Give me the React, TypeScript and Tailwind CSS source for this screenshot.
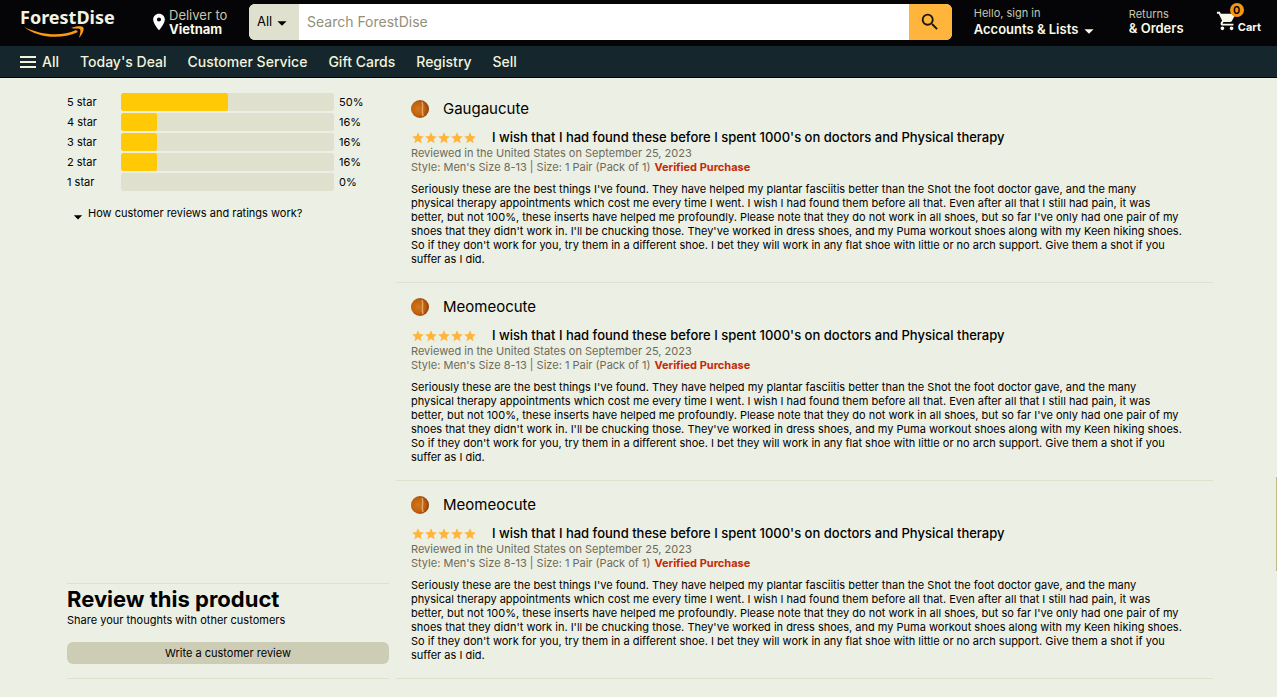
import React from "react";
import { MdLocationOn, MdSearch, MdShoppingCart, MdStar, MdArrowDropDown } from "react-icons/md";

const ratings = [
  { stars: 5, percent: 50 },
  { stars: 4, percent: 16 },
  { stars: 3, percent: 16 },
  { stars: 2, percent: 16 },
  { stars: 1, percent: 0 },
];

const reviewText = [
  "Seriously these are the best things I've found. They have helped my plantar fasciitis better than the Shot the foot doctor gave, and the many",
  "physical therapy appointments which cost me every time I went. I wish I had found them before all that. Even after all that I still had pain, it was",
  "better, but not 100%, these inserts have helped me profoundly. Please note that they do not work in all shoes, but so far I've only had one pair of my",
  "shoes that they didn't work in. I'll be chucking those. They've worked in dress shoes, and my Puma workout shoes along with my Keen hiking shoes.",
  "So if they don't work for you, try them in a different shoe. I bet they will work in any flat shoe with little or no arch support. Give them a shot if you",
  "suffer as I did.",
].join("\n");

const reviewers = ["Gaugaucute", "Meomeocute", "Meomeocute"];

const navLinks = ["Today's Deal", "Customer Service", "Gift Cards", "Registry", "Sell"];

function Logo() {
  return (
    <a href="#" className="flex w-24 flex-col text-[#f3f3e2]">
      <span className="font-['Noto_Sans',sans-serif] text-[18px] leading-[18px] font-bold">ForestDise</span>
      <svg viewBox="0 0 64 13" className="ml-1 h-[13px] w-16" aria-hidden="true">
        <path d="M0 1C17 9 37 11 52 4L54 6C36 14 14 12 0 1Z" fill="#ff9913" />
        <path d="M47 2C52 0 57 0 59 1C61 3 58 9 55 12C56 8 57 5 56 3C54 2 50 3 47 2Z" fill="#ff9913" />
      </svg>
    </a>
  );
}

function Header() {
  return (
    <header>
      <div className="flex h-[46px] items-center bg-[#050507] pr-4 pl-5">
        <Logo />
        <a href="#" className="ml-[33px] flex w-[100px] items-center pb-0.5 text-[13px] leading-[14px]">
          <MdLocationOn className="size-5 shrink-0 text-white" />
          <span className="flex flex-col whitespace-nowrap">
            <span className="text-[#c8c6ac]">Deliver to</span>
            <span className="font-bold text-[#fafae9]">Vietnam</span>
          </span>
        </a>
        <form className="-mt-0.5 flex h-9 min-w-0 flex-1 overflow-hidden rounded-md bg-white" onSubmit={(e) => e.preventDefault()}>
          <div className="relative w-[50px] shrink-0 bg-[#e0e0cf] text-black">
            <select aria-label="Search category" className="h-full w-full appearance-none bg-transparent pl-2 text-[13px] outline-none">
              <option>All</option>
            </select>
            <MdArrowDropDown className="pointer-events-none absolute top-2 right-1.5 size-[22px]" />
          </div>
          <input
            type="search"
            aria-label="Search ForestDise"
            placeholder="Search ForestDise"
            className="min-w-0 flex-1 bg-white px-2 pb-0.5 text-[14px] text-black outline-none placeholder:text-[#929078]"
          />
          <button type="submit" aria-label="Search" className="flex w-[43px] items-center justify-center bg-[#ffb43c] text-[#1b160c]">
            <MdSearch className="size-[22px]" />
          </button>
        </form>
        <a href="#" className="ml-[22px] flex w-[155px] flex-col pb-1.5 whitespace-nowrap">
          <span className="pt-0.5 text-[11px] leading-4 text-[#c8c6ac]">Hello, sign in</span>
          <span className="flex h-4 items-center text-[13px] leading-4 font-semibold text-[#fafae9]">
            Accounts &amp; Lists
            <MdArrowDropDown className="mt-1 size-[22px]" />
          </span>
        </a>
        <a href="#" className="flex w-[87px] flex-col pb-1.5 whitespace-nowrap">
          <span className="pt-0.5 text-[11px] leading-[14px] text-[#c8c6ac]">Returns</span>
          <span className="text-[13px] leading-[14px] font-semibold text-[#fafae9]">&amp; Orders</span>
        </a>
        <a href="#" className="relative flex items-center pb-1 text-[#fafae9]">
          <MdShoppingCart className="size-[22px]" />
          <span className="absolute -top-1 left-[14px] flex size-[14px] items-center justify-center rounded-full bg-[#f79614] text-[11px] font-semibold text-black">
            0
          </span>
          <span className="pt-3 text-[11px] leading-4 font-bold">Cart</span>
        </a>
      </div>
      <nav className="flex h-8 items-center gap-[21px] border-b border-black bg-[#15262d] px-5 text-[14px] font-medium text-[#f3f3dc]">
        <button type="button" className="flex items-center gap-1.5">
          <svg viewBox="0 0 16 12" className="h-3 w-4" aria-hidden="true">
            <path d="M0 1H16M0 6H16M0 11H16" stroke="currentColor" strokeWidth="2" />
          </svg>
          All
        </button>
        {navLinks.map((link) => (
          <a key={link} href="#" className="whitespace-nowrap">
            {link}
          </a>
        ))}
      </nav>
    </header>
  );
}

function RatingSummary() {
  return (
    <section>
      <ul className="flex flex-col gap-0.5">
        {ratings.map(({ stars, percent }) => (
          <li key={stars} className="flex h-[18px] items-center text-[11px]">
            <span className="w-[54px]">{stars} star</span>
            <div className="h-full w-[213px] overflow-hidden rounded-xs bg-[#e0e0cf]">
              <div className="h-full rounded-xs bg-[#ffca05]" style={{ width: `${percent === 16 ? 17 : percent}%` }} />
            </div>
            <span className="ml-[5px]">{percent}%</span>
          </li>
        ))}
      </ul>
      <button type="button" className="mt-2 ml-px flex items-center text-[11px] leading-4">
        <MdArrowDropDown className="mt-2 size-5" />
        How customer reviews and ratings work?
      </button>
    </section>
  );
}

function ReviewPrompt() {
  return (
    <section className="border-y border-[#e0e1cc]">
      <h2 className="mt-0.5 text-[22px] leading-[26px] font-bold">Review this product</h2>
      <p className="text-[11px] leading-4">Share your thoughts with other customers</p>
      <button type="button" className="mt-[14px] mb-[14px] h-[22px] w-full rounded-md bg-[#cdccb4] text-[11px]">
        Write a customer review
      </button>
    </section>
  );
}

function Avatar() {
  return (
    <svg viewBox="0 0 18 18" className="size-[18px]" aria-hidden="true">
      <defs>
        <radialGradient id="avatar-fill" cx="0.4" cy="0.5" r="0.6">
          <stop offset="0" stopColor="#d2781a" />
          <stop offset="0.6" stopColor="#c0620f" />
          <stop offset="1" stopColor="#93400b" />
        </radialGradient>
      </defs>
      <circle cx="9" cy="9" r="9" fill="url(#avatar-fill)" />
      <path d="M11 2C13 6 10 10 12 16" fill="none" stroke="#e0a468" strokeWidth="1.5" />
    </svg>
  );
}

function Review({ name }: { name: string }) {
  return (
    <article className="border-b border-[#e0e1cc] px-[15px] pt-3 pb-[15px] text-[11px] leading-[14px]">
      <div className="flex h-6 items-center gap-[14px]">
        <Avatar />
        <span className="text-[15px]">{name}</span>
      </div>
      <div className="mt-[7px] flex h-[18px] items-center">
        <div role="img" aria-label="5 out of 5 stars" className="flex w-[81px] pt-0.5 text-[#ffb43c]">
          {[1, 2, 3, 4, 5].map((n) => (
            <MdStar key={n} className="-mr-px size-[14px] last:mr-0" />
          ))}
        </div>
        <h3 className="text-[13px] font-medium">I wish that I had found these before I spent 1000's on doctors and Physical therapy</h3>
      </div>
      <p className="text-[#6d6b58]">Reviewed in the United States on September 25, 2023</p>
      <p className="text-[#6d6b58]">
        Style: Men's Size 8-13 | Size: 1 Pair (Pack of 1)
        <span className="ml-1 font-bold text-[#c52b05]">Verified Purchase</span>
      </p>
      <p className="mt-2 pb-px whitespace-pre-line">{reviewText}</p>
    </article>
  );
}

export default function App() {
  return (
    <div className="relative min-h-screen bg-[#ecefe3] font-['Inter','Liberation_Sans',sans-serif] text-black">
      <Header />
      <main className="flex gap-[7px] pt-[7px] pr-16 pb-[17px] pl-[67px]">
        <aside className="flex w-[322px] shrink-0 flex-col justify-between pt-2">
          <RatingSummary />
          <ReviewPrompt />
        </aside>
        <div className="min-w-0 flex-1">
          {reviewers.map((name, i) => (
            <Review key={i} name={name} />
          ))}
        </div>
      </main>
      <div className="absolute top-[477px] right-0 h-[94px] w-px bg-[#bdb98c]" />
    </div>
  );
}
